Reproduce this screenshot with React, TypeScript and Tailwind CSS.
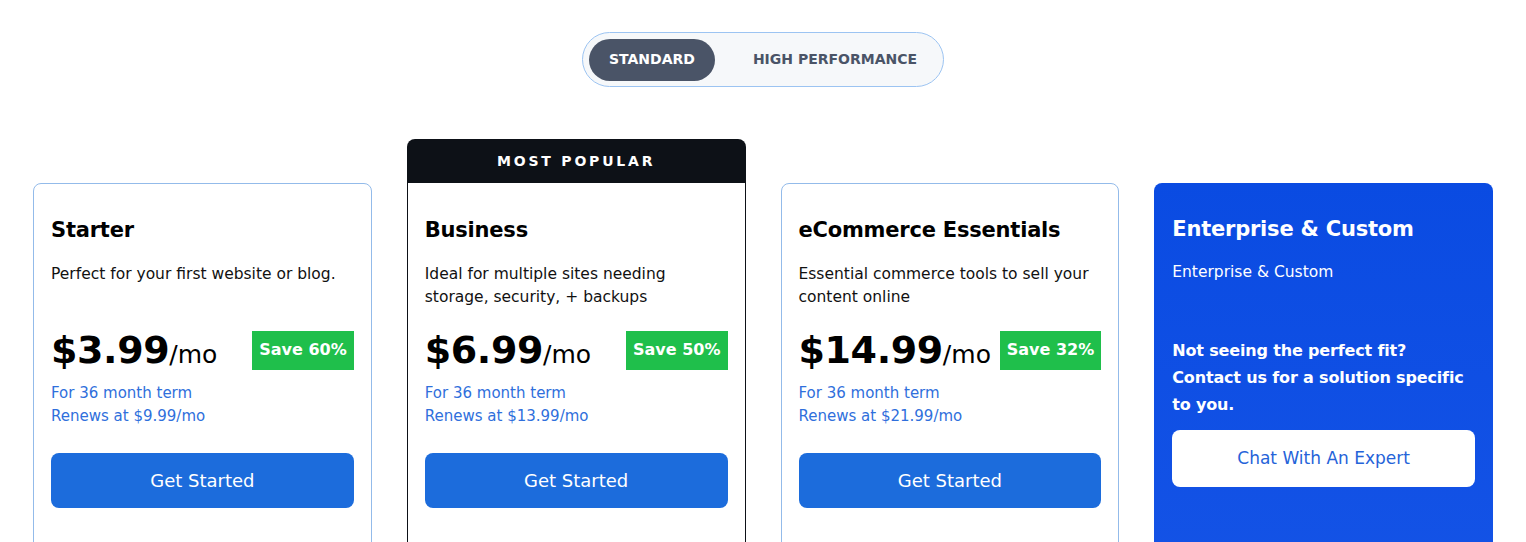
import React, { useState } from 'react'

type Plan = {
  name: string
  desc: string
  price: string
  save: string
  renew: string
  popular?: boolean
}

const plans: Plan[] = [
  { name: 'Starter', desc: 'Perfect for your first website or blog.', price: '$3.99', save: 'Save 60%', renew: 'Renews at $9.99/mo' },
  { name: 'Business', desc: 'Ideal for multiple sites needing storage, security, + backups', price: '$6.99', save: 'Save 50%', renew: 'Renews at $13.99/mo', popular: true },
  { name: 'eCommerce Essentials', desc: 'Essential commerce tools to sell your content online', price: '$14.99', save: 'Save 32%', renew: 'Renews at $21.99/mo' },
]

function PlanCard({ plan }: { plan: Plan }) {
  return (
    <div className="flex flex-col">
      {plan.popular ? (
        <div className="h-[44px] rounded-t-[8px] bg-[#0d1117] flex items-center justify-center text-white text-[14px] font-bold tracking-[0.2em]">
          MOST POPULAR
        </div>
      ) : (
        <div className="h-[44px]" />
      )}
      <div
        className={`flex-1 h-[400px] bg-white px-[17px] ${
          plan.popular ? 'pt-[32px] border border-t-0 border-[#0d1117]' : 'pt-[31px] border border-[#93bbea] rounded-t-[8px]'
        }`}
      >
        <h3 className="text-[21px] leading-[30px] font-bold tracking-[-0.01em] text-black">{plan.name}</h3>
        <p className="mt-[18px] h-[46px] text-[15.5px] leading-[23px] text-[#111]">{plan.desc}</p>
        <div className="mt-[18px] h-[46px] flex items-center justify-between">
          <div className="flex items-baseline text-black">
            <span className="text-[38px] leading-[46px] font-bold tracking-[-0.01em]">{plan.price}</span>
            <span className="text-[25px]">/mo</span>
          </div>
          <span className="h-[39px] px-[7px] flex items-center bg-[#1fbf4b] text-white text-[16px] font-bold">{plan.save}</span>
        </div>
        <div className="mt-[9px] text-[15px] leading-[23px] text-[#2f6fdc]">
          <p>For 36 month term</p>
          <p>{plan.renew}</p>
        </div>
        <button className="mt-[25px] w-full h-[55px] rounded-[8px] bg-[#1c6cdc] text-white text-[18px]">Get Started</button>
      </div>
    </div>
  )
}

export default function App() {
  const [mode, setMode] = useState<'standard' | 'high'>('standard')

  return (
    <div className="w-[1526px] h-[542px] overflow-hidden bg-white font-['DejaVu_Sans','Noto_Sans',sans-serif]">
      <div className="pt-[32px] flex justify-center">
        <div className="h-[55px] p-[6px] flex items-center rounded-full border border-[#9cc4f2] bg-[#f6f8fa]">
          <button
            onClick={() => setMode('standard')}
            className={`h-[42px] px-[20px] rounded-full text-[14px] font-bold ${
              mode === 'standard' ? 'bg-[#4a5467] text-white' : 'text-[#4a5467]'
            }`}
          >
            STANDARD
          </button>
          <button
            onClick={() => setMode('high')}
            className={`h-[42px] px-[20px] ml-[18px] rounded-full text-[14px] font-bold ${
              mode === 'high' ? 'bg-[#4a5467] text-white' : 'text-[#4a5467]'
            }`}
          >
            HIGH PERFORMANCE
          </button>
        </div>
      </div>

      <div className="mt-[52px] px-[33px] grid grid-cols-4 gap-[35px]">
        {plans.map((p) => (
          <PlanCard key={p.name} plan={p} />
        ))}
        <div className="flex flex-col">
          <div className="h-[44px]" />
          <div className="h-[400px] rounded-t-[8px] bg-gradient-to-b from-[#0a4be2] to-[#1453e6] px-[18px] pt-[31px] text-white">
            <h3 className="text-[21px] leading-[30px] font-bold tracking-[-0.01em]">Enterprise &amp; Custom</h3>
            <p className="mt-[17px] text-[15.5px] leading-[23px]">Enterprise &amp; Custom</p>
            <p className="mt-[53px] text-[16px] leading-[27px] font-bold tracking-[-0.01em]">
              Not seeing the perfect fit? Contact us for a solution specific to you.
            </p>
            <button className="mt-[12px] w-full h-[57px] rounded-[8px] bg-white text-[#2563d9] text-[17px]">Chat With An Expert</button>
          </div>
        </div>
      </div>
    </div>
  )
}
